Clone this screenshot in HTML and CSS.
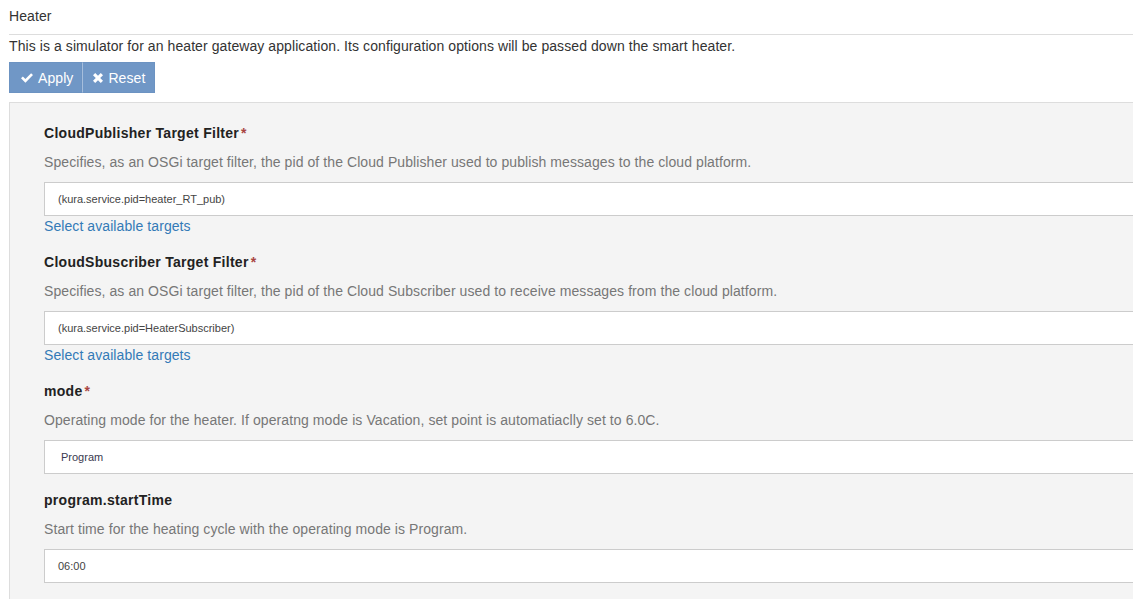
FILE: index.html
```html
<!DOCTYPE html>
<html>
<head>
<meta charset="utf-8">
<link rel="stylesheet" href="styles.css">
</head>
<body>
<div class="page">
  <div class="title">Heater</div>
  <p class="intro">This is a simulator for an heater gateway application. Its configuration options will be passed down the smart heater.</p>
  <div class="btn-group">
    <button class="btn btn-apply"><svg class="ico" viewBox="0 0 12 10" width="12" height="10"><path d="M0 5.3 L1.9 3.4 L4.4 5.9 L10.1 0.2 L12 2.1 L4.4 9.7 Z" fill="#fff"/></svg>Apply</button>
    <button class="btn btn-reset"><svg class="ico" viewBox="0 0 10 10" width="10" height="10"><path d="M0 2.2 L2.2 0 L5 2.8 L7.8 0 L10 2.2 L7.2 5 L10 7.8 L7.8 10 L5 7.2 L2.2 10 L0 7.8 L2.8 5 Z" fill="#fff"/></svg>Reset</button>
  </div>
  <div class="panel">
    <div class="field">
      <div class="label">CloudPublisher Target Filter<span class="req">*</span></div>
      <div class="desc">Specifies, as an OSGi target filter, the pid of the Cloud Publisher used to publish messages to the cloud platform.</div>
      <div class="input">(kura.service.pid=heater_RT_pub)</div>
      <a class="link">Select available targets</a>
    </div>
    <div class="field">
      <div class="label">CloudSbuscriber Target Filter<span class="req">*</span></div>
      <div class="desc">Specifies, as an OSGi target filter, the pid of the Cloud Subscriber used to receive messages from the cloud platform.</div>
      <div class="input">(kura.service.pid=HeaterSubscriber)</div>
      <a class="link">Select available targets</a>
    </div>
    <div class="field">
      <div class="label">mode<span class="req">*</span></div>
      <div class="desc">Operating mode for the heater. If operatng mode is Vacation, set point is automatiaclly set to 6.0C.</div>
      <div class="input select">Program</div>
    </div>
    <div class="field">
      <div class="label">program.startTime</div>
      <div class="desc">Start time for the heating cycle with the operating mode is Program.</div>
      <div class="input">06:00</div>
    </div>
  </div>
</div>
</body>
</html>
```
FILE: styles.css
```css
html, body {
  margin: 0;
  padding: 0;
  overflow: hidden;
  background: #fff;
}
body {
  font-family: "Liberation Sans", Arial, sans-serif;
  font-size: 14px;
  color: #333;
  letter-spacing: 0.08px;
}
.page {
  padding: 6px 0 0 9px;
  width: 1200px;
}
.title {
  line-height: 20px;
  padding-bottom: 8px;
  border-bottom: 1px solid #ddd;
}
.intro {
  margin: 1px 0 0;
  line-height: 20px;
}
.btn-group {
  display: flex;
  margin-top: 6px;
}
.btn {
  display: flex;
  align-items: center;
  gap: 5px;
  height: 31px;
  background: #7097c6;
  border: 1px solid #6c93c2;
  color: #fff;
  font-family: "Liberation Sans", Arial, sans-serif;
  font-size: 14px;
  letter-spacing: 0.08px;
  border-radius: 0;
}
.btn-apply {
  padding: 0 8px 0 11px;
}
.btn-reset {
  padding: 0 9px 0 10px;
  border-left: 1px solid #a6bedc;
}
.ico {
  display: block;
}
.panel {
  margin-top: 9px;
  background: #f4f4f4;
  border: 1px solid #ddd;
  padding: 20px 0 0 34px;
  height: 600px;
}
.field {
  margin-bottom: 16px;
}
.label {
  font-weight: bold;
  line-height: 20px;
  color: #222;
  letter-spacing: 0.28px;
}
.req {
  color: #a94442;
  margin-left: 2px;
}
.desc {
  color: #777;
  line-height: 20px;
  margin-top: 9px;
}
.input {
  margin-top: 10px;
  height: 32px;
  background: #fff;
  border: 1px solid #ccc;
  font-size: 11px;
  letter-spacing: 0;
  line-height: 32px;
  padding-left: 13px;
  color: #444;
}
.input.select {
  padding-left: 16px;
  color: #3a3a4f;
}
.link {
  display: block;
  color: #337ab7;
  line-height: 20px;
}
```
